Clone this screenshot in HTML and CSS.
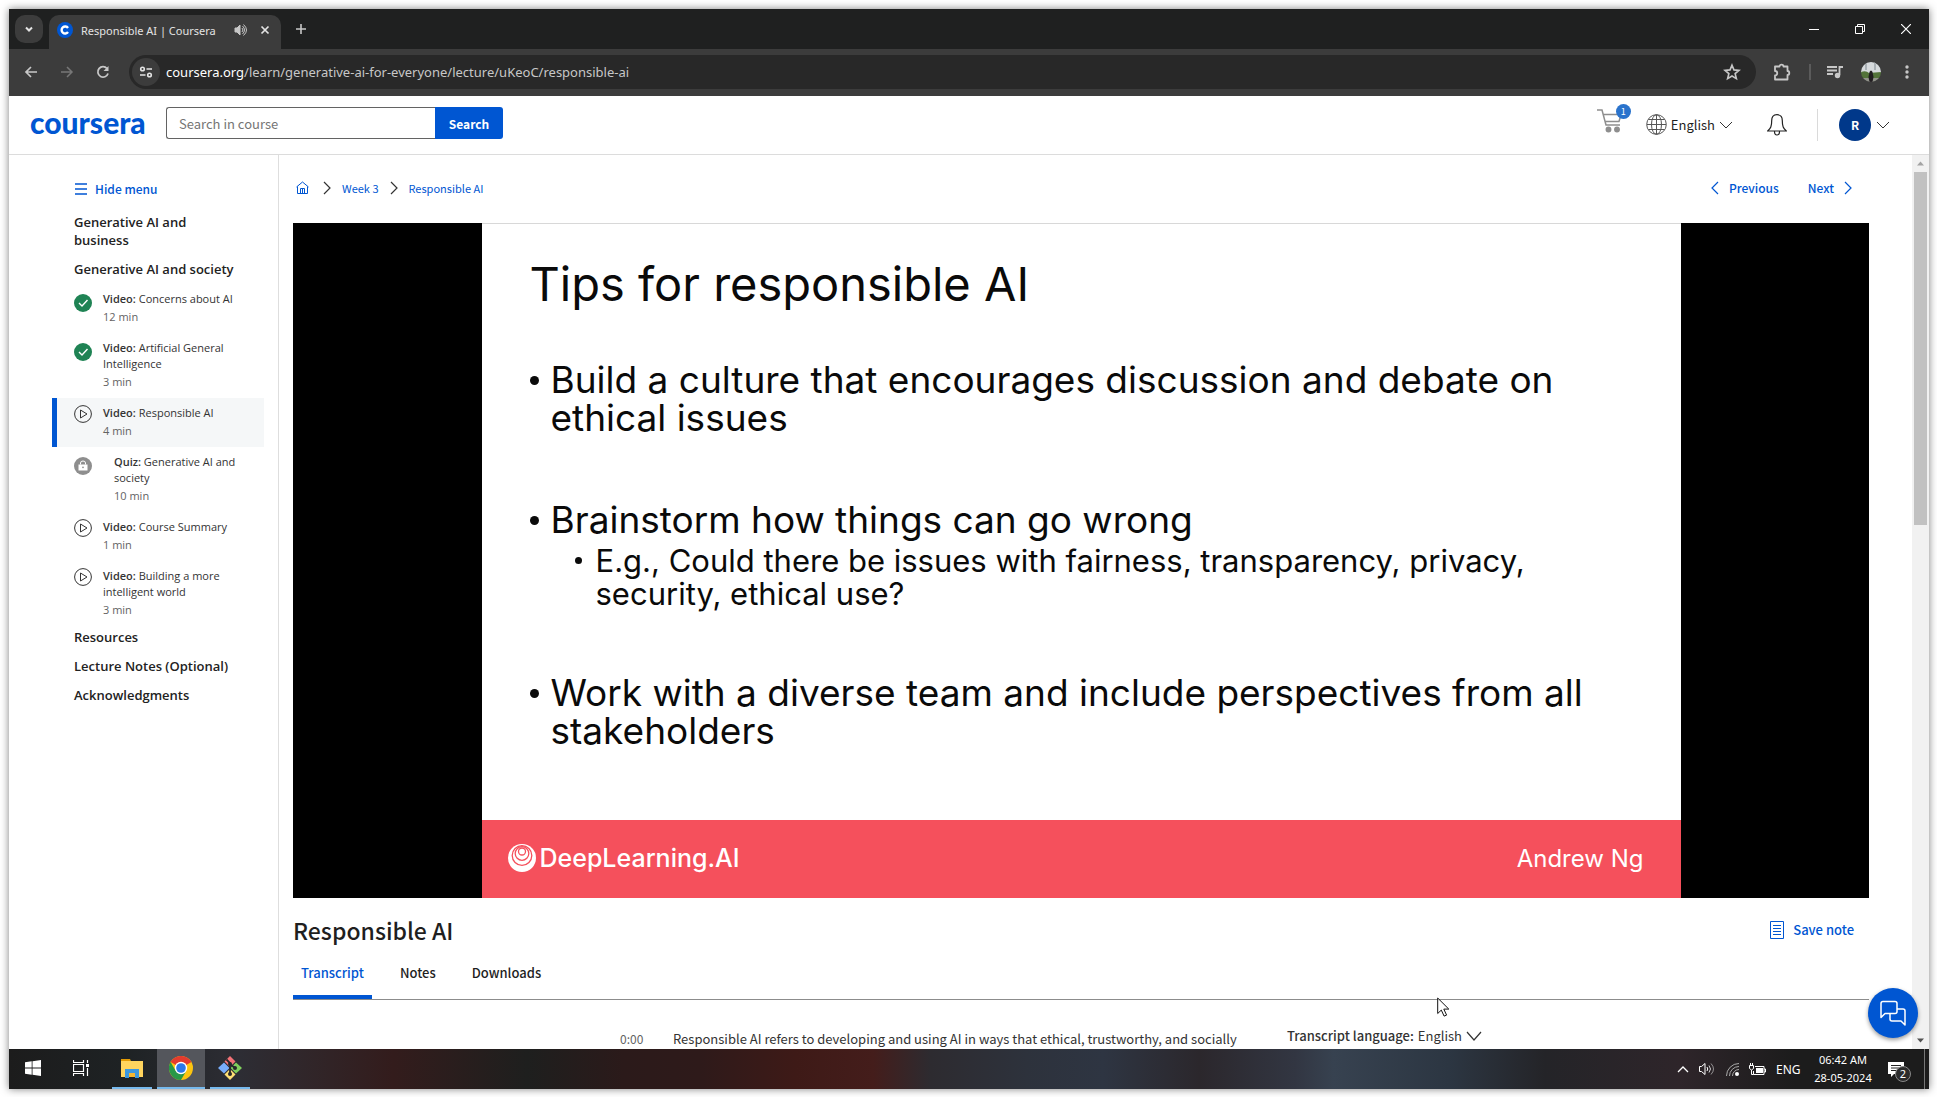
FILE: index.html
```html
<!DOCTYPE html>
<html lang="en">
<head>
<meta charset="utf-8">
<title>Responsible AI | Coursera</title>
<link rel="stylesheet" href="styles.css">
</head>
<body>
<div class="desktop">

  <div class="tabstrip">
    <button class="tab-search" aria-label="Search tabs"><svg width="10" height="10" viewBox="0 0 10 10"><path d="M2 3.5l3 3 3-3" fill="none" stroke="currentColor" stroke-width="2"/></svg></button>
    <div class="tab">
      <svg class="favicon" width="16" height="16" viewBox="0 0 16 16"><circle cx="8" cy="8" r="8" fill="#0056d2"/><path d="M11 6a3.5 3.5 0 1 0 0 4" fill="none" stroke="#fff" stroke-width="2.4"/></svg>
      <span class="tab-title">Responsible AI | Coursera</span>
      <svg width="14" height="12" viewBox="0 0 14 12" fill="none" stroke="#c7c7c7"><path d="M1 4h2l3-3v10l-3-3H1z" fill="#c7c7c7"/><path d="M8 4q2 2 0 4M8.500 2q4 4 0 8M9.500.500q6 5.500 0 11"/></svg>
      <button class="icon-btn tab-close" aria-label="Close tab"><svg width="10" height="10" viewBox="0 0 10 10"><path d="M1.500 1.500l7 7M8.500 1.500l-7 7" stroke="#e3e3e3" stroke-width="1.700"/></svg></button>
    </div>
    <button class="icon-btn new-tab" aria-label="New tab"><svg width="12" height="12" viewBox="0 0 12 12"><path d="M6 1v10M1 6h10" stroke="#c7c7c7" stroke-width="1.600"/></svg></button>
    <div class="window-controls">
      <button class="icon-btn" aria-label="Minimize"><svg width="10" height="10" viewBox="0 0 10 10"><path d="M0 5.500h10" stroke="#fff"/></svg></button>
      <button class="icon-btn" aria-label="Restore"><svg width="10" height="10" viewBox="0 0 10 10"><path d="M.5 2.500h7v7h-7zM2.500 2.500v-2h7v7h-2" fill="none" stroke="#fff"/></svg></button>
      <button class="icon-btn" aria-label="Close"><svg width="10" height="10" viewBox="0 0 10 10"><path d="M0 0l10 10M10 0L0 10" stroke="#fff" stroke-width="1.200"/></svg></button>
    </div>
  </div>

  <div class="toolbar">
    <button class="icon-btn" aria-label="Back"><svg width="14" height="14" viewBox="0 0 14 14"><path d="M13 7H2M7 2L2 7l5 5" fill="none" stroke="#c7c7c7" stroke-width="1.700"/></svg></button>
    <button class="icon-btn" aria-label="Forward"><svg width="14" height="14" viewBox="0 0 14 14"><path d="M1 7h11M7 2l5 5-5 5" fill="none" stroke="#777" stroke-width="1.500"/></svg></button>
    <button class="icon-btn" aria-label="Reload"><svg width="14" height="14" viewBox="0 0 14 14"><path d="M12 8.500A5.200 5.200 0 1 1 11 3.500" fill="none" stroke="#c7c7c7" stroke-width="1.800"/><path d="M12.500 1v5h-5z" fill="#c7c7c7"/></svg></button>
    <div class="address">
      <button class="icon-btn site-info" aria-label="Site information"><svg width="14" height="12" viewBox="0 0 14 12" fill="none" stroke="#e3e3e3" stroke-width="1.600"><circle cx="3.500" cy="3" r="1.800"/><path d="M7.500 3H13M1 9h5.500"/><circle cx="10.500" cy="9" r="1.800"/></svg></button>
      <span class="url"><b>coursera.org</b>/learn/generative-ai-for-everyone/lecture/uKeoC/responsible-ai</span>
      <button class="icon-btn" aria-label="Bookmark"><svg width="18" height="18" viewBox="0 0 24 24"><path d="M12 3l2.600 6.200 6.700.6-5.100 4.400 1.600 6.600-5.800-3.500-5.800 3.500 1.600-6.600-5.100-4.400 6.700-.6z" fill="none" stroke="#c7c7c7" stroke-width="2.200"/></svg></button>
    </div>
    <div class="toolbar-actions">
      <button class="icon-btn" aria-label="Extensions"><svg width="18" height="18" viewBox="0 0 18 18"><path d="M2 3.500h4.500a2 1.800 0 0 1 4 0H14.500v4.500a1.800 2 0 0 1 0 4v4.500H2V12.500a2.200 2.200 0 0 0 0-4.500z" fill="none" stroke="#c7c7c7" stroke-width="1.800" stroke-linejoin="round"/></svg></button>
      <span class="tool-divider"></span>
      <button class="icon-btn" aria-label="Media controls"><svg width="16" height="14" viewBox="0 0 16 14"><path d="M0 2h10M0 5.500h10M0 9h6M16 2h-3.500v8" fill="none" stroke="#c7c7c7" stroke-width="1.800"/><circle cx="10.500" cy="10.500" r="2.700" fill="#c7c7c7"/></svg></button>
      <button class="icon-btn" aria-label="Profile"><svg width="20" height="20" viewBox="0 0 20 20"><defs><clipPath id="round"><circle cx="10" cy="10" r="10"/></clipPath></defs><g clip-path="url(#round)"><path fill="#d6dadd" d="M0 0h20v11H0z"/><path fill="#a9b0b5" d="M4 0h2v8H4zM13 0h2v8h-2z"/><path fill="#53733a" d="M0 10q5-2 8 1l12-1v6H0z"/><path fill="#91938a" d="M0 16h20v4H0z"/><path fill="#211d20" d="M8.500 10q1.500-3 3 0l1 5-1 5h-3l-1-5z"/></g></svg></button>
      <button class="icon-btn" aria-label="Menu"><svg width="4" height="14" viewBox="0 0 4 14" fill="#c7c7c7"><circle cx="2" cy="2" r="1.700"/><circle cx="2" cy="7" r="1.700"/><circle cx="2" cy="12" r="1.700"/></svg></button>
    </div>
  </div>

  <header class="site-header">
    <a class="brand" href="#">coursera</a>
    <form class="search" role="search">
      <input type="text" aria-label="Search in course" placeholder="Search in course">
      <button type="button">Search</button>
    </form>
    <div class="account">
      <a class="cart" href="#" aria-label="Cart"><svg width="25" height="24" viewBox="0 0 25 24" fill="none" stroke="#8e8e8e" stroke-width="1.500"><path d="M0 1h5l4 15h14M6.500 5.500H24L22 12.500H8"/><circle cx="11.500" cy="20.500" r="2.200" fill="#8e8e8e"/><circle cx="20" cy="20.500" r="2.200" fill="#8e8e8e"/></svg><span class="badge">1</span></a>
      <button class="language"><svg width="21" height="21" viewBox="0 0 21 21" fill="none" stroke="#555"><circle cx="10.500" cy="10.500" r="9.800"/><ellipse cx="10.500" cy="10.500" rx="5" ry="9.800"/><path d="M10.500 1v19M1 10.500h19M2.500 5.500h16M2.500 15.500h16"/></svg><span>English</span><svg width="14" height="8" viewBox="0 0 14 8"><path d="M1 1l6 6 6-6" fill="none" stroke="#333"/></svg></button>
      <button class="icon-btn bell" aria-label="Notifications"><svg width="20" height="22" viewBox="0 0 20 22"><path d="M10 .700C6 .7 4.700 3.500 4.700 6.500c0 6-1 8-4 10.500h18.600c-3-2.500-4-4.500-4-10.500 0-3-1.300-5.800-5.300-5.800zM7.500 17.500a2.500 3.500 0 0 0 5 0" fill="none" stroke="#222" stroke-width="1.200"/></svg></button>
      <span class="header-divider"></span>
      <button class="user" aria-label="Account"><span class="avatar">R</span><svg width="14" height="8" viewBox="0 0 14 8"><path d="M1 1l6 6 6-6" fill="none" stroke="#333"/></svg></button>
    </div>
  </header>

  <div class="page">
    <nav class="sidebar" aria-label="Course">
      <button class="hide-menu"><svg width="12" height="12" viewBox="0 0 12 12"><path d="M0 1h12M0 6h12M0 11h12" stroke="#0056d2" stroke-width="1.500"/></svg><span>Hide menu</span></button>
      <a class="section" href="#">Generative AI and business</a>
      <a class="section" href="#">Generative AI and society</a>
      <ul class="lessons">
        <li><a href="#"><svg class="state" width="18" height="18" viewBox="0 0 18 18"><circle cx="9" cy="9" r="9" fill="#1f8354"/><path d="M5 9l3 3 5.500-6" fill="none" stroke="#fff" stroke-width="1.400"/></svg><span class="lesson"><span><b>Video:</b> Concerns about AI</span><small>12 min</small></span></a></li>
        <li><a href="#"><svg class="state" width="18" height="18" viewBox="0 0 18 18"><circle cx="9" cy="9" r="9" fill="#1f8354"/><path d="M5 9l3 3 5.500-6" fill="none" stroke="#fff" stroke-width="1.400"/></svg><span class="lesson"><span><b>Video:</b> Artificial General Intelligence</span><small>3 min</small></span></a></li>
        <li class="current"><a href="#" aria-current="page"><svg class="state play" width="18" height="18" viewBox="0 0 18 18" fill="none" stroke="#333"><circle cx="9" cy="9" r="8.400"/><path d="M6.500 5v8l6.500-4z"/></svg><span class="lesson"><span><b>Video:</b> Responsible AI</span><small>4 min</small></span></a></li>
        <li class="locked"><a href="#"><svg class="state" width="18" height="18" viewBox="0 0 18 18"><circle cx="9" cy="9" r="9" fill="#8e8e8e"/><path d="M4.500 7.500h9v6h-9z" fill="#fff"/><path d="M6.500 7.500V6q0-2 2.500-2t2.500 2v1.500" fill="none" stroke="#fff"/><circle cx="9" cy="10.300" r=".9" fill="#8e8e8e"/></svg><span class="lesson"><span><b>Quiz:</b> Generative AI and society</span><small>10 min</small></span></a></li>
        <li><a href="#"><svg class="state play" width="18" height="18" viewBox="0 0 18 18" fill="none" stroke="#333"><circle cx="9" cy="9" r="8.400"/><path d="M6.500 5v8l6.500-4z"/></svg><span class="lesson"><span><b>Video:</b> Course Summary</span><small>1 min</small></span></a></li>
        <li><a href="#"><svg class="state play" width="18" height="18" viewBox="0 0 18 18" fill="none" stroke="#333"><circle cx="9" cy="9" r="8.400"/><path d="M6.500 5v8l6.500-4z"/></svg><span class="lesson"><span><b>Video:</b> Building a more intelligent world</span><small>3 min</small></span></a></li>
      </ul>
      <a class="section" href="#">Resources</a>
      <a class="section" href="#">Lecture Notes (Optional)</a>
      <a class="section" href="#">Acknowledgments</a>
    </nav>

    <main class="content">
      <div class="crumb-row">
        <nav class="crumbs" aria-label="Breadcrumb">
          <a class="home" href="#" aria-label="Home"><svg width="13" height="13" viewBox="0 0 13 13"><path d="M1.500 5.500v7h10v-7M.5 6l6-5 6 5M4.500 12.500v-5h4v5M6.500 8v4" fill="none" stroke="#0056d2"/></svg></a>
          <svg width="8" height="14" viewBox="0 0 8 14"><path d="M1 1l6 6-6 6" fill="none" stroke="#333" stroke-width="1.200"/></svg>
          <a href="#">Week 3</a>
          <svg width="8" height="14" viewBox="0 0 8 14"><path d="M1 1l6 6-6 6" fill="none" stroke="#333" stroke-width="1.200"/></svg>
          <a href="#">Responsible AI</a>
        </nav>
        <div class="pager">
          <a href="#"><svg width="8" height="14" viewBox="0 0 8 14"><path d="M7 1L1 7l6 6" fill="none" stroke="#0056d2" stroke-width="1.200"/></svg><span>Previous</span></a>
          <a href="#"><span>Next</span><svg width="8" height="14" viewBox="0 0 8 14"><path d="M1 1l6 6-6 6" fill="none" stroke="#0056d2" stroke-width="1.200"/></svg></a>
        </div>
      </div>

      <section class="video" aria-label="Lecture video">
        <div class="slide">
          <div class="slide-body">
            <h2>Tips for responsible AI</h2>
            <ul class="points">
              <li>Build a culture that encourages discussion and debate on<br>ethical issues</li>
              <li>Brainstorm how things can go wrong
                <ul><li>E.g., Could there be issues with fairness, transparency, privacy,<br>security, ethical use?</li></ul>
              </li>
              <li>Work with a diverse team and include perspectives from all<br>stakeholders</li>
            </ul>
          </div>
          <div class="slide-footer">
            <span class="dl"><svg width="28" height="28" viewBox="0 0 28 28"><circle cx="14" cy="14" r="14" fill="#fff"/><g fill="none" stroke="#f5505c" stroke-width="1.300"><circle cx="14" cy="11.500" r="9.800"/><circle cx="14" cy="9.500" r="6.800"/><circle cx="14" cy="7.500" r="3.500"/></g></svg>DeepLearning.AI</span>
            <span>Andrew Ng</span>
          </div>
        </div>
      </section>

      <div class="title-row">
        <h1>Responsible AI</h1>
        <button class="save"><svg width="14" height="18" viewBox="0 0 14 18" fill="none" stroke="#0056d2"><path d="M.5.500h13v17H.5zM3 4.500h8M3 7.500h8M3 10.500h8M3 13.500h8"/></svg><span>Save note</span></button>
      </div>

      <div class="tabs" role="tablist">
        <button role="tab" aria-selected="true" class="selected">Transcript</button>
        <button role="tab" aria-selected="false">Notes</button>
        <button role="tab" aria-selected="false">Downloads</button>
      </div>

      <div class="transcript">
        <span class="time">0:00</span>
        <p>Responsible AI refers to developing and using AI in ways that ethical, trustworthy, and socially</p>
        <button class="caption-lang"><b>Transcript language:</b> English <svg width="16" height="10" viewBox="0 0 16 10"><path d="M1 1l7 8 7-8" fill="none" stroke="#333" stroke-width="1.200"/></svg></button>
      </div>
    </main>

    <div class="scrollbar" aria-hidden="true">
      <svg width="17" height="17" viewBox="0 0 17 17"><path d="M8.500 6.500l3.500 4H5z" fill="#a3a3a3"/></svg>
      <span class="thumb"></span>
      <svg width="17" height="17" viewBox="0 0 17 17"><path d="M8.500 10.500l3.500-4H5z" fill="#505050"/></svg>
    </div>
    <button class="chat" aria-label="Chat"><svg width="26" height="26" viewBox="0 0 26 26" fill="none" stroke="#fff" stroke-width="1.500" stroke-linejoin="round"><path d="M3 1.500h12q2 0 2 2v8q0 2-2 2H5l-4 4v-14q0-2 2-2z"/><path d="M17 9h6q2 0 2 2v14l-4-4h-9q-2 0-2-2v-5.500"/></svg></button>
    <svg class="pointer" width="13" height="20" viewBox="0 0 13 20"><path d="M.7 1v15.500l3.600-3.400 2.800 6 2.500-1-2.800-6h5z" fill="#fff" stroke="#111"/></svg>
  </div>

  <footer class="taskbar">
    <button aria-label="Start"><svg width="16" height="16" viewBox="0 0 16 16" fill="#fff"><path d="M0 2.300L6.700 1.300v6.300H0zM7.500 1.200L16 0v7.600H7.500zM0 8.400h6.700v6.300L0 13.700zM7.500 8.400H16V16l-8.500-1.200z"/></svg></button>
    <button aria-label="Task view"><svg width="17" height="16" viewBox="0 0 17 16" fill="none" stroke="#fff"><path d="M.5 0v2.500h10V0M.5 16v-2.500h10V16M.5 4.500h10v7H.5zM14.500 0v3M14.500 8v8" stroke-width="1.200"/><path d="M13 4h3v3h-3z" fill="#fff" stroke="none"/></svg></button>
    <button class="running" aria-label="File Explorer"><svg width="22" height="19" viewBox="0 0 22 19"><path d="M0 0h9l1 2v4H0z" fill="#e39b05"/><path d="M0 2h22v16H0z" fill="#ffd45e"/><path d="M4 19v-9h14v9h-4v-4H8v4z" fill="#3b97de"/><path d="M8 14h6v4H8z" fill="#f2b632"/></svg></button>
    <button class="running active" aria-label="Google Chrome"><svg width="24" height="24" viewBox="0 0 24 24"><circle cx="12" cy="12" r="12" fill="#fcc410"/><path d="M12 12L1.600 6A12 12 0 0 1 22.400 6z" fill="#e33b2e"/><path d="M1.600 6A12 12 0 0 0 12 24l5.200-9L12 12 6.800 15z" fill="#279847"/><path d="M12 6h10.400L12 7z" fill="#e33b2e"/><circle cx="12" cy="12" r="6.200" fill="#fff"/><circle cx="12" cy="12" r="4.800" fill="#2b78ea"/></svg></button>
    <button class="running" aria-label="Git"><svg width="24" height="24" viewBox="0 0 24 24"><path d="M12 0l5.500 5.500-5.500 5.500-5.500-5.500z" fill="#f37277"/><path d="M18 6.500l6 5.500-6 5.500-5.500-5.500z" fill="#80cf5d"/><path d="M6 6.500l5.500 5.500L6 17.500 0 12z" fill="#78adfb"/><path d="M12 13l5.500 5.500L12 24l-5.500-5.500z" fill="#ffdf74"/><path d="M8.500 3.500L12 7v12M12 8l5 4" fill="none" stroke="#26262b" stroke-width="1.800"/><circle cx="12" cy="8" r="2" fill="#26262b"/><circle cx="17" cy="12" r="2" fill="#26262b"/><circle cx="12" cy="18" r="2" fill="#26262b"/></svg></button>
    <div class="tray">
      <svg width="12" height="8" viewBox="0 0 12 8"><path d="M1 7l5-5 5 5" fill="none" stroke="#fff" stroke-width="1.300"/></svg>
      <svg width="17" height="14" viewBox="0 0 17 14" fill="none" stroke="#fff"><path d="M.5 4.500h2l3.500-3v11l-3.500-3h-2z"/><path d="M8 5q1.500 2 0 4"/><path d="M10 3.500q3 3.500 0 7" opacity=".8"/><path d="M12 1.500q5 5.500 0 11" opacity=".5"/></svg>
      <svg width="13" height="13" viewBox="0 0 13 13" fill="none" stroke="#aaa"><path d="M.5 13A12.500 12.500 0 0 1 13 .5M3.500 13A9.500 9.500 0 0 1 13 3.500M6.500 13A6.500 6.500 0 0 1 13 6.500"/><circle cx="11" cy="11" r="2" fill="#fff" stroke="none"/></svg>
      <svg width="17" height="13" viewBox="0 0 17 13" fill="none" stroke="#fff"><path d="M6 3.500h9v8H4.500V8M15 6h1.500v3H15M.5 2.500h4v3l-2 1.500-2-1.500zM1.500 0v2M3.500 0v2M2.500 7v4.500h2"/><path d="M7 5h7v5H7z" fill="#fff" stroke="none"/></svg>
      <span class="ime">ENG</span>
      <div class="clock"><span>06:42 AM</span><span>28-05-2024</span></div>
      <button class="action-center" aria-label="Notifications"><svg width="16" height="15" viewBox="0 0 16 15"><path d="M0 0h16v12H6l-3 3v-3H0z" fill="#fff"/><path d="M3 3.500h10M3 6h10M3 8.500h7" stroke="#222"/></svg><span class="count">2</span></button>
      <span class="peek"></span>
    </div>
  </footer>
</div>
</body>
</html>
```
FILE: styles.css
```css
* { box-sizing: border-box; }

:root {
  --blue: #0056d2;
  --ui: "Noto Sans", "Open Sans", sans-serif;
  --source: "Noto Sans CJK SC", "Noto Sans", sans-serif;
}

body {
  margin: 0;
  padding: 9px 8px 8px 9px;
  height: 100vh;
  overflow: hidden;
  background: #fff;
  font-family: var(--source);
  font-size: 13px;
  color: #1f1f1f;
}

a { color: inherit; text-decoration: none; }
button { padding: 0; border: 0; background: none; font: inherit; color: inherit; }
h1, h2, p, ul { margin: 0; padding: 0; }
ul { list-style: none; }
svg { display: block; flex: none; }

.desktop {
  display: flex;
  flex-direction: column;
  height: 100%;
  background: #fff;
  box-shadow: 0 0 8px rgba(0, 0, 0, .5);
}

.icon-btn { display: flex; align-items: center; justify-content: center; width: 24px; height: 24px; flex: none; }

/* Browser tab strip */
.tabstrip {
  display: flex;
  align-items: center;
  height: 40px;
  flex: none;
  padding-left: 6px;
  background: #1f2020;
  color: #e3e3e3;
  font-family: var(--ui);
}
.tab-search { display: grid; place-items: center; width: 28px; height: 28px; border-radius: 10px; background: #3c3c3c; color: #e3e3e3; }
.tab {
  display: flex;
  align-items: center;
  align-self: flex-end;
  width: 232px;
  height: 34px;
  margin-left: 6px;
  padding: 0 4px 4px 8px;
  border-radius: 10px 10px 0 0;
  background: #3c3c3c;
}
.tab-title { flex: 1; margin-left: 8px; font-size: 11px; white-space: nowrap; }
.tab-close { margin-left: 5px; }
.new-tab { margin-left: 8px; }
.window-controls { display: flex; gap: 22px; margin-left: auto; padding-right: 11px; }

/* Browser toolbar */
.toolbar {
  display: flex;
  align-items: center;
  gap: 12px;
  height: 47px;
  flex: none;
  padding: 0 10px 2px;
  background: #3c3c3c;
}
.address { display: flex; align-items: center; flex: 1; height: 34px; margin-left: 2px; padding: 0 12px 0 3px; border-radius: 17px; background: #282828; }
.site-info { width: 28px; height: 28px; border-radius: 50%; background: #3c3c3c; }
.url { flex: 1; margin-left: 6px; font-family: var(--ui); font-size: 13px; color: #c7c7c7; }
.url b { font-weight: 400; color: #fff; }
.toolbar-actions { display: flex; align-items: center; gap: 12px; padding-left: 2px; }
.tool-divider { width: 2px; height: 16px; margin-left: 3px; background: #5b5b5b; }

/* Site header */
.site-header { display: flex; align-items: center; height: 59px; flex: none; padding: 0 39px 4px 21px; border-bottom: 1px solid #dcdcdc; }
.brand { width: 136px; padding-bottom: 2px; font: 900 30px/32px Lato, sans-serif; color: var(--blue); }
.search { display: flex; }
.search input { width: 269px; height: 32px; padding: 0 12px; border: 1px solid #636363; border-right: 0; border-radius: 3px 0 0 3px; font: 13px var(--source); }
.search input::placeholder { color: #757575; opacity: 1; }
.search button { width: 68px; height: 32px; border-radius: 0 3px 3px 0; background: var(--blue); color: #fff; font-size: 12px; font-weight: 700; }
.account { display: flex; align-items: center; margin-left: auto; padding-top: 3px; }
.cart { position: relative; margin: 0 24px 8px 0; }
.badge { position: absolute; left: 19px; top: -5px; width: 15px; height: 15px; border-radius: 50%; background: #2a73cc; color: #fff; font-size: 9px; line-height: 15px; text-align: center; }
.language { display: flex; align-items: center; gap: 4px; margin-right: 34px; }
.bell { width: 20px; }
.header-divider { width: 1px; height: 32px; margin: 0 21px 0 30px; background: #dadada; }
.user { display: flex; align-items: center; gap: 5px; }
.avatar { display: grid; place-items: center; width: 32px; height: 32px; border-radius: 50%; background: #00388a; color: #fff; font-size: 12px; font-weight: 700; }

/* Course page */
.page { position: relative; display: flex; flex: 1; min-height: 0; overflow: hidden; }

.sidebar { width: 270px; flex: none; padding: 24px 14px 0 43px; border-right: 1px solid #dedede; font-family: "Open Sans", sans-serif; }
.hide-menu { display: flex; align-items: center; gap: 8px; height: 20px; margin: 0 0 14px 23px; font: 500 12px/20px var(--source); color: var(--blue); }
.section { display: block; margin: 0 20px 11px 22px; font-size: 13px; line-height: 18px; font-weight: 600; color: #222; }
.lessons { margin: -5px 0 2px; font-size: 11px; line-height: 16px; color: #333; }
.lessons a { display: flex; padding: 7px 14px 7px 17px; border-left: 5px solid transparent; }
.current a { border-left-color: var(--blue); background: #f5f7f8; }
.state { margin-top: 3px; }
.play { margin-top: 0; }
.lesson { display: flex; flex-direction: column; margin-left: 11px; }
.locked .lesson { margin-left: 22px; }
.lesson b { font-weight: 600; }
.lesson small { margin-top: 1px; font-size: 11px; line-height: 18px; color: #636363; }

.content { display: flex; flex-direction: column; flex: 1; min-width: 0; padding: 0 43px 0 14px; }
.crumb-row { display: flex; align-items: center; justify-content: space-between; height: 68px; flex: none; padding-bottom: 3px; color: var(--blue); }
.crumbs { display: flex; align-items: center; gap: 11px; padding-left: 3px; font-size: 11px; }
.home { margin-right: 3px; }
.pager { display: flex; gap: 29px; padding-right: 17px; font-size: 12px; font-weight: 500; }
.pager a { display: flex; align-items: center; gap: 10px; }

.video { display: flex; justify-content: center; flex: none; height: 675px; background: #000; }
.slide { display: flex; flex-direction: column; width: 1199px; background: #fff; border-top: 1px solid #d8d8d8; font-family: Inter, sans-serif; color: #0a0a0a; }
.slide-body { flex: 1; padding: 31px 40px 0 48px; }
.slide h2 { font-size: 47px; line-height: 58px; font-weight: 400; }
.points { margin-top: 48px; font-size: 37px; line-height: 38px; }
.points > li { margin-bottom: 64px; padding-left: 21px; }
.points li { position: relative; white-space: nowrap; }
.points li::before { content: ""; position: absolute; left: 0; top: 15px; width: 9px; height: 9px; border-radius: 50%; background: #0a0a0a; }
.points ul { margin-top: 5px; padding-left: 24px; font-size: 31px; line-height: 33px; }
.points ul li { padding-left: 21px; }
.points ul li::before { top: 13px; width: 7px; height: 7px; }
.slide-footer { display: flex; align-items: center; justify-content: space-between; height: 78px; padding: 0 37px 2px 26px; background: #f5505c; color: #fff; font-size: 24px; }
.dl { display: flex; align-items: center; gap: 4px; font-size: 25px; font-weight: 500; }

.title-row { display: flex; align-items: center; justify-content: space-between; height: 66px; flex: none; padding: 0 15px 3px 0; }
.title-row h1 { font-size: 23px; line-height: 32px; font-weight: 500; }
.save { display: flex; align-items: center; gap: 9px; font-weight: 500; color: var(--blue); }

.tabs { display: flex; gap: 20px; height: 36px; flex: none; border-bottom: 1px solid #8c8c8c; }
.tabs button { padding: 0 8px 13px; border-bottom: 4px solid transparent; border-radius: 2px 2px 0 0; font-size: 13px; line-height: 18px; font-weight: 500; }
.tabs .selected { border-bottom-color: var(--blue); color: var(--blue); }

.transcript { display: flex; align-items: flex-start; padding: 29px 0 0 327px; line-height: 20px; white-space: nowrap; color: #333; }
.time { width: 53px; font-size: 12px; color: #636363; }
.transcript p { width: 614px; }
.caption-lang { display: flex; align-items: center; gap: 4px; margin-top: -3px; }
.caption-lang b { font-weight: 500; }

.scrollbar { display: flex; flex-direction: column; width: 17px; background: #f1f1f1; }
.thumb { width: 13px; height: 353px; margin: 0 auto auto 2px; background: #c1c1c1; }
.chat { position: absolute; right: 11px; bottom: 11px; display: grid; place-items: center; width: 50px; height: 50px; border-radius: 50%; background: var(--blue); box-shadow: 0 2px 4px rgba(0, 0, 0, .4); }
.pointer { position: absolute; right: 479px; bottom: 32px; }

/* Taskbar */
.taskbar {
  display: flex;
  height: 40px;
  flex: none;
  background: linear-gradient(90deg, #1c1c1c 0, #1e2224 6%, #2d2d34 12%, #30272b 15%, #331c1c 20%, #1e1f1e 27%, #2b1a1a 32%, #2e1a1a 36%, #3e1a17 41%, #441d1b 45%, #2d2b30 48%, #2d323c 53%, #2e3542 57%, #2b272c 62%, #323642 67%, #374250 69%, #2c3642 75%, #242428 80%, #2e252a 87%, #1c1c1c 93%);
  color: #fff;
  font-family: var(--ui);
  font-size: 12px;
}
.taskbar > button { display: grid; place-items: center; width: 48px; border-bottom: 2px solid transparent; }
.taskbar > .running { width: 40px; margin: 0 4px 0 7px; border-bottom-color: #76b9ed; }
.taskbar > .active { width: 48px; margin: 0 -2px 0 1px; background: #54565c; }
.tray { display: flex; align-items: center; margin-left: auto; gap: 10px; }
.ime { width: 26px; }
.clock { display: flex; flex-direction: column; align-items: center; width: 62px; font-size: 11px; line-height: 18px; white-space: nowrap; }
.action-center { position: relative; width: 24px; height: 20px; margin: 0 2px 0 4px; }
.count { position: absolute; left: 7px; top: 7px; width: 16px; height: 16px; border: 1px solid #888; border-radius: 50%; background: #2b2b2b; font-size: 11px; line-height: 14px; }
.peek { width: 1px; height: 100%; margin-right: 4px; background: #777; }
```
